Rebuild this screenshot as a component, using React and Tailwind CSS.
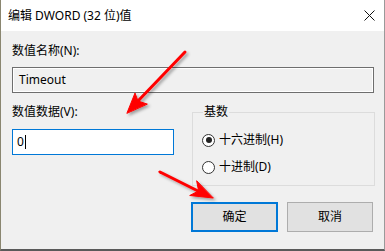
import React from "react";

const font = {
  fontFamily: '"Segoe UI", "Noto Sans", "Noto Sans CJK SC", sans-serif',
};

function Radio({ checked, label }) {
  return (
    <label className="flex h-4 items-center">
      <span className="flex h-[13px] w-[13px] items-center justify-center rounded-full border border-[#333333] bg-white">
        {checked && <span className="h-[6px] w-[6px] rounded-full bg-[#222222]" />}
      </span>
      <span className="ml-[4px] text-[12px] leading-4 text-black">{label}</span>
    </label>
  );
}

function Arrows() {
  return (
    <svg
      className="pointer-events-none absolute left-0 top-0"
      width="385"
      height="251"
      viewBox="0 0 385 251"
    >
      <defs>
        <filter id="sh" x="-20%" y="-20%" width="140%" height="140%">
          <feDropShadow dx="2" dy="2" stdDeviation="1.6" floodColor="#000" floodOpacity="0.35" />
        </filter>
      </defs>
      <g filter="url(#sh)" fill="#ff0000" stroke="#ff0000" strokeLinecap="round">
        <line x1="185" y1="52" x2="138" y2="101" strokeWidth="3" />
        <polygon points="127,113 135,93 138,101 147,104" strokeWidth="1" strokeLinejoin="round" />
        <line x1="160" y1="172" x2="198" y2="191" strokeWidth="3" />
        <polygon points="213,198 189.7,195.5 198.6,190.9 196.7,181.1" strokeWidth="1" strokeLinejoin="round" />
      </g>
    </svg>
  );
}

export default function App() {
  return (
    <div className="relative h-[251px] w-[385px] overflow-hidden bg-[#f0f0f0]" style={font}>
      <div className="flex h-[251px] w-[385px] flex-col border-b-2 border-l border-r border-b-[#5a5a5a] border-l-[#8a8670] border-r-[#9a9a9a] bg-[#f0f0f0]">
        {/* title bar */}
        <div className="flex h-[31px] shrink-0 items-center justify-between bg-white pl-[7px] pr-[9px]">
          <span className="text-[12px] leading-4 text-black">编辑 DWORD (32 位)值</span>
          <svg width="11" height="11" viewBox="0 0 11 11">
            <path d="M0.5 0.5 L10.5 10.5 M10.5 0.5 L0.5 10.5" stroke="#111" strokeWidth="1" />
          </svg>
        </div>

        {/* body */}
        <div className="flex flex-col pl-[11px] pt-[12px]">
          <div className="text-[12px] leading-4 text-black">数值名称(N):</div>
          <div className="mt-2 flex h-[26px] w-[362px] items-center border border-[#6e6e6e] bg-[#f0f0f0] pl-[6px] text-[12px] text-black shadow-[inset_0_0_0_1px_#ffffff]">
            Timeout
          </div>

          <div className="mt-[11px] flex">
            <div className="flex w-[162px] flex-col">
              <div className="text-[12px] leading-4 text-black">数值数据(V):</div>
              <div className="mt-[9px] flex h-[26px] items-center border border-[#0078d7] bg-white pl-[4px] text-[12px] text-black">
                <span>0</span>
                <span className="ml-[1px] h-[14px] w-[1px] bg-black" />
              </div>
            </div>

            <fieldset className="ml-[18px] h-[82px] w-[183px] border border-[#dcdcdc] pl-[9px]">
              <legend className="ml-[1px] px-[1px] text-[12px] leading-4 text-black">基数</legend>
              <div className="mt-[12px] flex flex-col gap-[11px]">
                <Radio checked label="十六进制(H)" />
                <Radio label="十进制(D)" />
              </div>
            </fieldset>
          </div>

          <div className="mt-[16px] flex w-[362px] justify-end gap-[9px] pr-[1px]">
            <button className="h-[30px] w-[87px] border-2 border-[#0078d7] bg-[#e1e1e1] text-[12px] text-black">
              确定
            </button>
            <button className="h-[30px] w-[86px] border border-[#adadad] bg-[#e1e1e1] text-[12px] text-black">
              取消
            </button>
          </div>
        </div>
      </div>
      <Arrows />
    </div>
  );
}
